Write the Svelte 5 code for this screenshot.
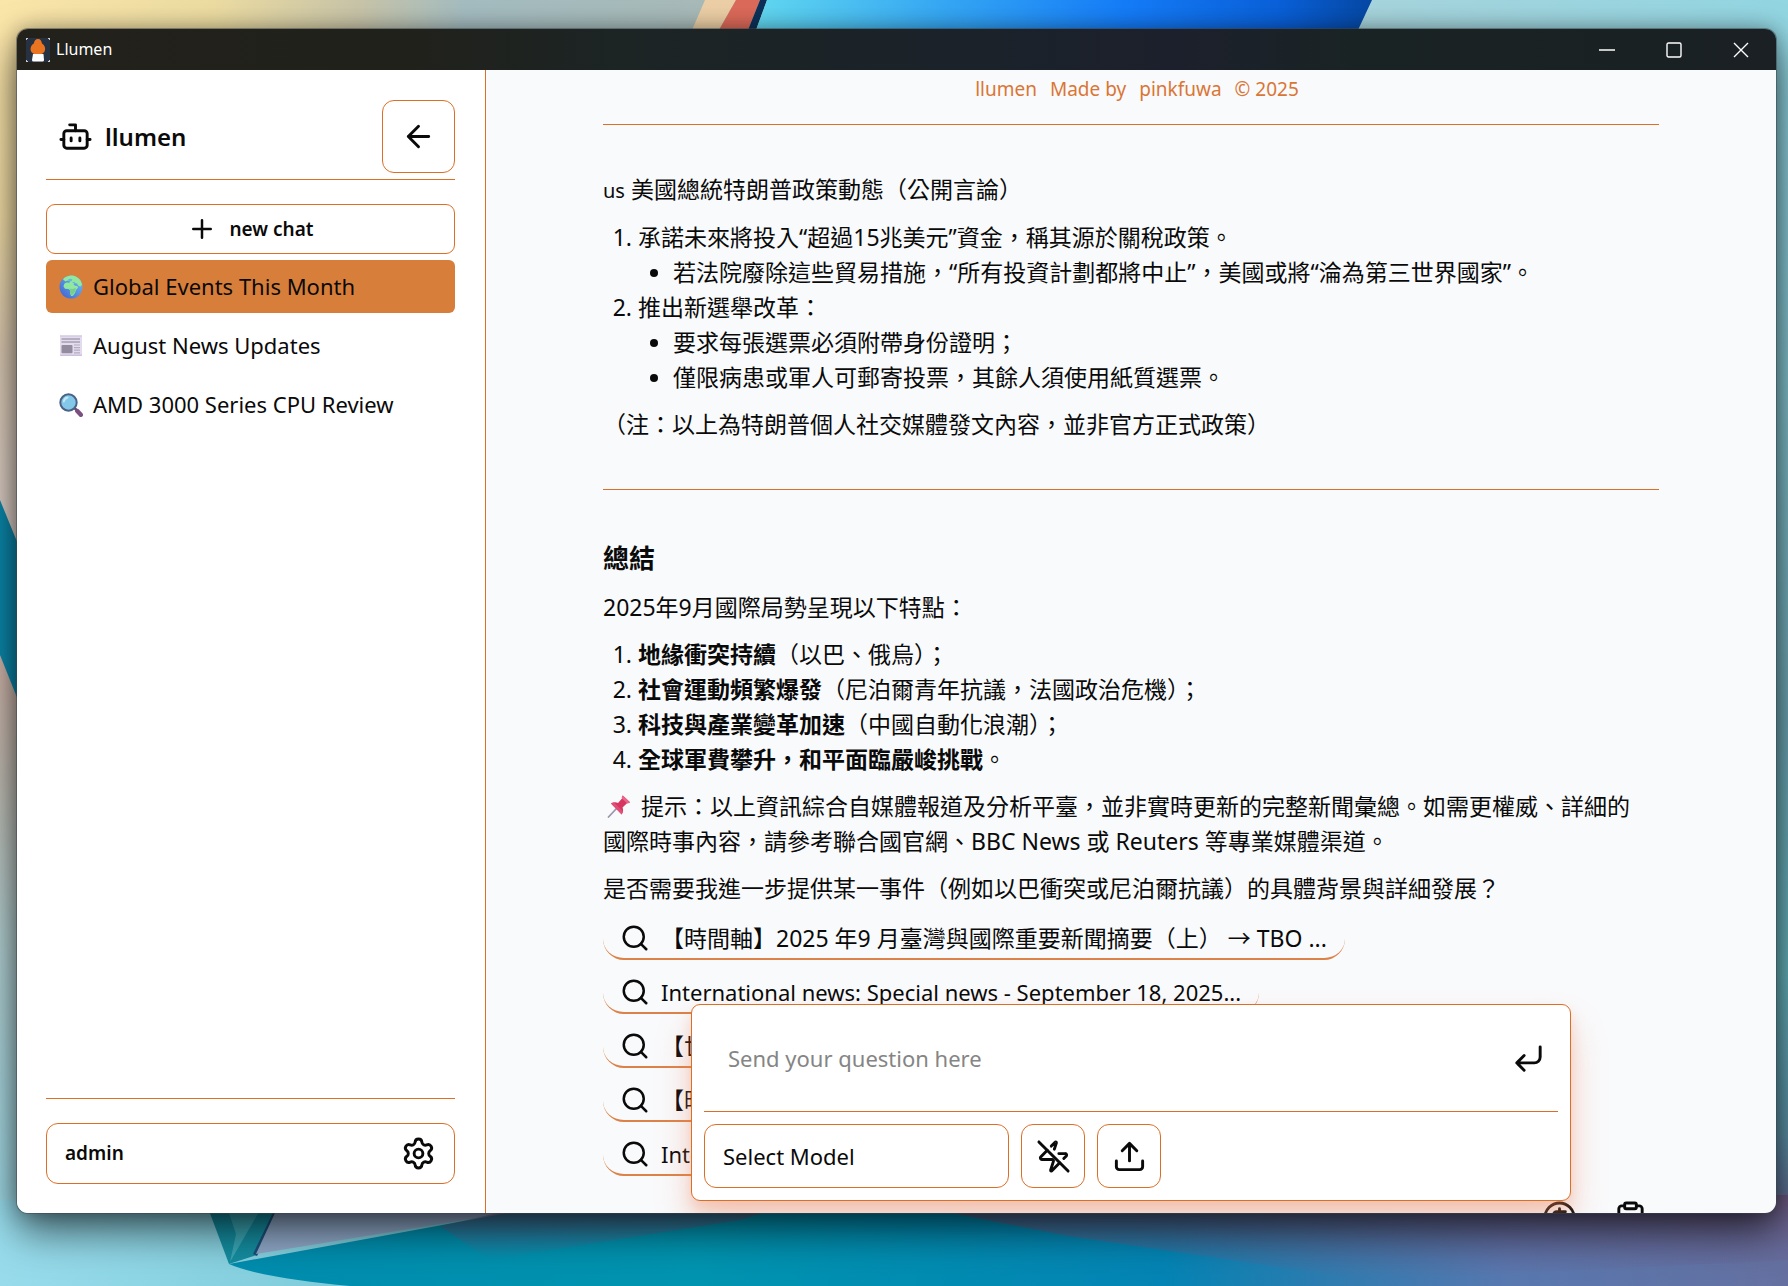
<script>
  const chats = [
    { icon: 'globe', title: 'Global Events This Month', active: true },
    { icon: 'news', title: 'August News Updates', active: false },
    { icon: 'lens', title: 'AMD 3000 Series CPU Review', active: false }
  ];

  const summary = [
    { lead: '地緣衝突持續', rest: '（以巴、俄烏）；' },
    { lead: '社會運動頻繁爆發', rest: '（尼泊爾青年抗議，法國政治危機）；' },
    { lead: '科技與產業變革加速', rest: '（中國自動化浪潮）；' },
    { lead: '全球軍費攀升，和平面臨嚴峻挑戰', rest: '。' }
  ];

  const sources = [
    { cjk: true, title: '【時間軸】2025 年9 月臺灣與國際重要新聞摘要（上） → TBO ...' },
    { cjk: false, title: 'International news: Special news - September 18, 2025...' },
    { cjk: true, title: '【世界新聞】2025 年9 月' },
    { cjk: true, title: '【時事新聞】2025 年9 月' },
    { cjk: false, title: 'International news: September 2025' }
  ];

  let question = $state('');
</script>

{#snippet icon(name, cls)}
  <svg class="line-icon {cls}" viewBox="0 0 24 24" aria-hidden="true">
    {#if name === 'bot'}
      <path d="M12 8V4H8" />
      <rect width="16" height="12" x="4" y="8" rx="2" />
      <path d="M2 14h2M20 14h2M15 13v2M9 13v2" />
    {:else if name === 'back'}
      <path d="m12 19-7-7 7-7M19 12H5" />
    {:else if name === 'plus'}
      <path d="M5 12h14M12 5v14" />
    {:else if name === 'settings'}
      <path d="M9.671 4.136a2.34 2.34 0 0 1 4.659 0 2.34 2.34 0 0 0 3.319 1.915 2.34 2.34 0 0 1 2.33 4.033 2.34 2.34 0 0 0 0 3.831 2.34 2.34 0 0 1-2.33 4.033 2.34 2.34 0 0 0-3.319 1.915 2.34 2.34 0 0 1-4.659 0 2.34 2.34 0 0 0-3.32-1.915 2.34 2.34 0 0 1-2.33-4.033 2.34 2.34 0 0 0 0-3.831A2.34 2.34 0 0 1 6.35 6.051a2.34 2.34 0 0 0 3.319-1.915" />
      <circle cx="12" cy="12" r="3" />
    {:else if name === 'search'}
      <circle cx="11" cy="11" r="8" />
      <path d="m21 21-4.3-4.3" />
    {:else if name === 'enter'}
      <path d="M20 4v7a4 4 0 0 1-4 4H4M9 10l-5 5 5 5" />
    {:else if name === 'zap-off'}
      <path d="M10.513 4.856 13.12 2.17a.5.5 0 0 1 .86.46l-1.377 4.317" />
      <path d="M15.656 10H20a1 1 0 0 1 .78 1.63l-1.72 1.773" />
      <path d="M16.273 16.273 10.88 21.83a.5.5 0 0 1-.86-.46l1.92-6.02A1 1 0 0 0 11 14H4a1 1 0 0 1-.78-1.63l4.507-4.643" />
      <path d="m2 2 20 20" />
    {:else if name === 'upload'}
      <path d="M12 3v12M17 8l-5-5-5 5M21 15v4a2 2 0 0 1-2 2H5a2 2 0 0 1-2-2v-4" />
    {:else if name === 'cost'}
      <circle cx="12" cy="12" r="10" />
      <path d="M16 8h-6a2 2 0 1 0 0 4h4a2 2 0 1 1 0 4H8M12 18V6" />
    {:else if name === 'clipboard'}
      <rect width="8" height="4" x="8" y="2" rx="1" />
      <path d="M16 4h2a2 2 0 0 1 2 2v14a2 2 0 0 1-2 2H6a2 2 0 0 1-2-2V6a2 2 0 0 1 2-2h2" />
    {/if}
  </svg>
{/snippet}

{#snippet emoji(name)}
  <svg class="emoji" viewBox="0 0 24 24" aria-hidden="true">
    {#if name === 'globe'}
      <circle cx="12" cy="12" r="11.5" fill="url(#sea)" />
      <path d="M4 4.200C6 2 9.500.6 12.500.6c3.500 0 7 2 9 5l1.600 3.800-1.600 2.200-2-.6-1.500-2.500-2.500-.5-1 1.300 1.500 1.500 2.500.2.500 1.800-2 2.200-1 3-2 2.700-1.800.3-1.200-2.500.2-3-1.700-1.500-3.500-.2-1.500-2.300.8-2.700 2.200-1.200 3 .2.500-1.500-2.500-.8-2 1-1.500-1.300z" fill="#93e8a0" />
      <path d="M10 13.500 13.500 14l3.500-1-1 3.800-2 2.700-1.800.8-1.200-2.800.2-2.800z" fill="#74cf90" />
      <path d="m9 4.500 2.500-.8 2 .8-1 1.700-2.500.3zM13 7.200l2.500-.4.8.8-2 .7z" fill="#62b8e8" />
    {:else if name === 'news'}
      <path d="M1 1.500h22v19.500a1 1 0 0 1-1 1H2a1 1 0 0 1-1-1z" fill="#e3dcee" />
      <path d="M1 1.500h22v1H1zM1 20.500h22v.500a1 1 0 0 1-1 1H2a1 1 0 0 1-1-1z" fill="#cdbfdc" />
      <path d="M2.500 5h18.500M2.500 8h18.500" stroke="#a79fb3" stroke-width="1.300" />
      <rect x="2.500" y="11" width="11" height="8.200" rx="1" fill="#938c9f" />
      <path d="M15 11h6M15 13.600h6M15 16.200h6M15 18.800h6" stroke="#b4abc0" stroke-width="1.200" />
    {:else if name === 'lens'}
      <path d="m15.500 15 2.500 2.500" stroke="#5c5068" stroke-width="2.500" />
      <path d="m18.300 18 3.500 3.800" stroke="#7d4f80" stroke-width="4.400" stroke-linecap="round" />
      <circle cx="9.500" cy="9.500" r="8.200" fill="#83c8e8" stroke="#4b6285" stroke-width="2" />
      <path d="M4.800 8.500a5 5 0 0 1 3.800-4" fill="none" stroke="#c4e8f8" stroke-width="1.800" stroke-linecap="round" />
    {:else if name === 'pin'}
      <path d="M9.500 14.500 1.500 23" stroke="#9f94ad" stroke-width="1.800" stroke-linecap="round" />
      <path d="M4 9.500c2.500-1.500 5-1.500 7-.5l4-4.500c-.3-1.200 0-2.200.8-3L23 8.300c-.8.900-1.800 1.200-3 1L15.500 13.500c1 2.200.8 4.500-.8 7z" fill="#d6365f" />
      <path d="M15.800 1.500 23 8.300c-.8.900-1.800 1.200-3 1L15 4.500c-.3-1.200 0-2.200.8-3z" fill="#e9668a" />
      <path d="M4 9.500c1-.6 2-1 3-1.100l8.700 8.700c-.2 1.100-.5 2.300-1 3.400z" fill="#e04f77" />
    {/if}
  </svg>
{/snippet}

<div class="desktop">
  <svg class="wallpaper" viewBox="0 0 1788 1286" preserveAspectRatio="none" aria-hidden="true">
    <defs>
      <linearGradient id="sea" x1="0" y1="1" x2="1" y2="0">
        <stop offset="0" stop-color="#3f5fd0" />
        <stop offset="1" stop-color="#6fc4f0" />
      </linearGradient>
      <linearGradient id="sky" x1="0" x2="1">
        <stop offset="0" stop-color="#fbe6a9" />
        <stop offset=".12" stop-color="#ecdca2" />
        <stop offset=".2" stop-color="#c8c4a8" />
        <stop offset=".26" stop-color="#a4bcc0" />
        <stop offset=".4" stop-color="#a8bab8" />
        <stop offset=".75" stop-color="#a8d4dc" />
        <stop offset="1" stop-color="#92d6e2" />
      </linearGradient>
      <linearGradient id="left" x1="0" x2="0" y1="0" y2="1">
        <stop offset="0" stop-color="#fbe6a9" />
        <stop offset=".15" stop-color="#f2dda6" />
        <stop offset=".26" stop-color="#dccab4" />
        <stop offset=".4" stop-color="#dccfc8" />
        <stop offset=".5" stop-color="#cfb3a8" />
        <stop offset=".6" stop-color="#c0bdb4" />
        <stop offset=".72" stop-color="#b4d0d2" />
        <stop offset="1" stop-color="#98dcec" />
      </linearGradient>
      <linearGradient id="shore" x1="0" x2="1">
        <stop offset="0" stop-color="#98dcec" />
        <stop offset="1" stop-color="#74c4d2" />
      </linearGradient>
      <linearGradient id="right" x1="0" x2="0" y1="0" y2="1">
        <stop offset="0" stop-color="#92d6e2" />
        <stop offset=".3" stop-color="#84c4d0" />
        <stop offset=".55" stop-color="#70aab8" />
        <stop offset=".75" stop-color="#66b4bc" />
        <stop offset=".88" stop-color="#5c92a8" />
        <stop offset=".93" stop-color="#606c90" />
        <stop offset="1" stop-color="#6570a0" />
      </linearGradient>
      <linearGradient id="blue" x1="0" x2="1">
        <stop offset="0" stop-color="#62d8f0" />
        <stop offset=".3" stop-color="#36a8f4" />
        <stop offset=".6" stop-color="#157cf8" />
        <stop offset=".85" stop-color="#0a60d8" />
        <stop offset="1" stop-color="#0648a4" />
      </linearGradient>
      <linearGradient id="floor" x1="229" x2="1788" y1="1240" y2="1240" gradientUnits="userSpaceOnUse">
        <stop offset="0" stop-color="#008cae" />
        <stop offset=".3" stop-color="#0094b0" />
        <stop offset=".6" stop-color="#0484b4" />
        <stop offset=".7" stop-color="#2c7cb0" />
        <stop offset=".82" stop-color="#5878b0" />
        <stop offset="1" stop-color="#6570a0" />
      </linearGradient>
      <linearGradient id="dusk" x1="0" x2="0" y1="0" y2="1">
        <stop offset="0" stop-color="#6a5478" stop-opacity=".9" />
        <stop offset="1" stop-color="#6a6090" stop-opacity="0" />
      </linearGradient>
    </defs>
    <rect width="1788" height="1286" fill="url(#sky)" />
    <rect y="28" width="60" height="1258" fill="url(#left)" />
    <rect y="1200" width="500" height="86" fill="url(#shore)" />
    <rect x="1700" y="28" width="88" height="1258" fill="url(#right)" />
    <path d="M705 0h31l-17 30h-27z" fill="#eccfa6" />
    <path d="M736 0h24l-12 30h-29z" fill="#dc6a5a" />
    <path d="M760 0h7l-11 30h-8z" fill="#0d3158" />
    <path d="M767 0h605l-14 30H756z" fill="url(#blue)" />
    <path d="M0 500l18 44v156L0 655z" fill="#0c88ac" />
    <path d="M205 1200 229 1264l28-9 24-55z" fill="#148da0" />
    <path d="M228 1210l8 24-6 28 30-52z" fill="#3aa6b4" />
    <path d="M279 1200 253 1254l4 2 28-56z" fill="#1c4f7c" />
    <path d="M281 1200 256 1254l330-54z" fill="#8fa8c8" />
    <path d="M229 1264 486 1217 600 1195H1788v91H350C300 1281 255 1275 229 1264z" fill="url(#floor)" />
    <path d="M440 1226 600 1190h240l-100 30-250 40z" fill="url(#dusk)" />
    <path d="M860 1195h928v65l-420 20-300-44z" fill="url(#dusk)" />
  </svg>

  <div class="window">
    <header class="titlebar">
      <svg class="app-icon" viewBox="0 0 24 24" aria-hidden="true">
        <rect width="24" height="24" fill="#263142" />
        <path d="M0 0h2M0 0v2M24 0h-2M24 0v2M0 24h2M0 24v-2M24 24h-2M24 24v-2" stroke="#c8ccd2" stroke-width="2" />
        <path d="M12 1c2.500 0 3.500 2 4 4.500 2.500 1.500 3.500 4 3 6.500-.5 2.500-2.500 4.500-7 4.500S5 14.500 4.600 12c-.4-2.500.6-5 3.200-6.500C8.300 3 9.500 1 12 1z" fill="#ea7420" />
        <path d="M7 16h10.500l.5 6a1.500 1.500 0 0 1-1.500 1.500h-9A1.500 1.500 0 0 1 6 22z" fill="#fff" />
      </svg>
      <span class="app-name">Llumen</span>
      <button class="control" aria-label="Minimize">
        <svg viewBox="0 0 16 16"><path d="M0 8h16" /></svg>
      </button>
      <button class="control" aria-label="Maximize">
        <svg viewBox="0 0 16 16"><rect x="1" y="1" width="14" height="14" rx="1.5" /></svg>
      </button>
      <button class="control" aria-label="Close">
        <svg viewBox="0 0 16 16"><path d="m1 1 14 14M15 1 1 15" /></svg>
      </button>
    </header>

    <div class="body">
      <aside class="sidebar">
        <div class="brand">
          {@render icon('bot', 'large')}
          <h1>llumen</h1>
          <button class="back" aria-label="Collapse sidebar">{@render icon('back', 'large')}</button>
        </div>

        <button class="new-chat">{@render icon('plus', 'medium')}<span>new chat</span></button>
        <nav>
          {#each chats as chat}
            <a href="#{chat.icon}" class="chat" class:active={chat.active}>
              {@render emoji(chat.icon)}<span>{chat.title}</span>
            </a>
          {/each}
        </nav>

        <div class="account">
          <button class="user"><span>admin</span>{@render icon('settings', 'large')}</button>
        </div>
      </aside>

      <main>
        <div class="scroll">
          <p class="credit"><span>llumen</span><span>Made by</span><span>pinkfuwa</span><span>© 2025</span></p>
          <article>
            <hr />
            <p><span class="region">us</span> 美國總統特朗普政策動態（公開言論）</p>
            <ol>
              <li>
                承諾未來將投入“超過15兆美元”資金，稱其源於關稅政策。
                <ul><li>若法院廢除這些貿易措施，“所有投資計劃都將中止”，美國或將“淪為第三世界國家”。</li></ul>
              </li>
              <li>
                推出新選舉改革：
                <ul>
                  <li>要求每張選票必須附帶身份證明；</li>
                  <li>僅限病患或軍人可郵寄投票，其餘人須使用紙質選票。</li>
                </ul>
              </li>
            </ol>
            <p>（注：以上為特朗普個人社交媒體發文內容，並非官方正式政策）</p>
            <hr />
            <h3>總結</h3>
            <p>2025年9月國際局勢呈現以下特點：</p>
            <ol>
              {#each summary as point}
                <li><strong>{point.lead}</strong>{point.rest}</li>
              {/each}
            </ol>
            <p>
              <span class="pin">{@render emoji('pin')}</span> 提示：以上資訊綜合自媒體報道及分析平臺，並非實時更新的完整新聞彙總。如需更權威、詳細的國際時事內容，請參考聯合國官網、BBC News 或 Reuters 等專業媒體渠道。
            </p>
            <p>是否需要我進一步提供某一事件（例如以巴衝突或尼泊爾抗議）的具體背景與詳細發展？</p>
          </article>

          <div class="sources">
            {#each sources as source, i}
              <a href="#source-{i}" class="source" class:latin={!source.cjk}>
                {@render icon('search', 'medium')}<span>{source.title}</span>
              </a>
            {/each}
          </div>
          <div class="actions">
            <button aria-label="Cost">{@render icon('cost', 'large')}</button>
            <button aria-label="Copy">{@render icon('clipboard', 'large')}</button>
          </div>
        </div>

        <form class="composer">
          <div class="prompt">
            <textarea rows="1" placeholder="Send your question here" aria-label="Question" bind:value={question}></textarea>
            <button type="button" class="send" aria-label="Send">{@render icon('enter', 'large')}</button>
          </div>
          <div class="tools">
            <select aria-label="Model"><option>Select Model</option></select>
            <button type="button" class="tool" aria-label="Disable fast mode">{@render icon('zap-off', 'large')}</button>
            <button type="button" class="tool" aria-label="Upload file">{@render icon('upload', 'large')}</button>
          </div>
        </form>
      </main>
    </div>
  </div>
</div>

<style>
  :global(body) {
    margin: 0;
  }

  .desktop {
    --accent: #dc6e26;
    position: relative;
    box-sizing: border-box;
    height: 100vh;
    padding: 29px 12px 73px 17px;
    overflow: hidden;
    font-family: 'Noto Sans', 'Noto Sans CJK TC', sans-serif;
    font-size: 23px;
    line-height: 35px;
    color: #0a0a0a;
  }

  .desktop * {
    box-sizing: border-box;
  }

  .wallpaper {
    position: absolute;
    inset: 0;
    width: 100%;
    height: 100%;
  }

  .window {
    position: relative;
    display: flex;
    flex-direction: column;
    height: 100%;
    border-radius: 11px;
    overflow: hidden;
    box-shadow:
      0 0 0 1px rgba(60, 70, 75, 0.5),
      0 18px 40px rgba(0, 0, 0, 0.6),
      0 0 20px rgba(0, 0, 0, 0.3);
  }

  button,
  select,
  textarea {
    margin: 0;
    padding: 0;
    border: 0;
    background: none;
    font: inherit;
    color: inherit;
  }

  a {
    color: inherit;
    text-decoration: none;
  }

  .line-icon {
    flex: none;
    display: block;
    fill: none;
    stroke: currentColor;
    stroke-width: 2;
    stroke-linecap: round;
    stroke-linejoin: round;
  }

  .large {
    width: 35px;
    height: 35px;
  }

  .medium {
    width: 30px;
    height: 30px;
  }

  .emoji {
    flex: none;
    display: block;
    width: 24px;
    height: 24px;
  }

  .titlebar {
    flex: none;
    display: flex;
    align-items: center;
    height: 41px;
    padding: 0 2px 0 9px;
    background: linear-gradient(90deg, #22211b 0%, #21211b 22%, #1c2424 34%, #1b222a 55%, #1c202c 66%, #1a2324 76%, #1a2023 100%);
    color: #fff;
    font-size: 16px;
  }

  .app-icon {
    width: 24px;
    height: 24px;
  }

  .app-name {
    flex: 1;
    padding-left: 6px;
  }

  .control {
    display: grid;
    place-items: center;
    width: 67px;
    height: 100%;
  }

  .control svg {
    width: 16px;
    height: 16px;
    fill: none;
    stroke: #fff;
    stroke-width: 1.4;
  }

  .body {
    flex: 1;
    display: flex;
    min-height: 0;
  }

  .sidebar {
    flex: none;
    display: flex;
    flex-direction: column;
    width: 469px;
    padding: 30px 30px 29px 29px;
    border-right: 1px solid var(--accent);
    background: #fff;
  }

  .brand {
    display: flex;
    align-items: center;
    gap: 12px;
    padding: 0 0 6px 12px;
    border-bottom: 1px solid var(--accent);
  }

  h1 {
    flex: 1;
    margin: 0;
    font-size: 24px;
    font-weight: 600;
  }

  .back {
    display: grid;
    place-items: center;
    width: 73px;
    height: 73px;
    border: 1px solid var(--accent);
    border-radius: 12px;
  }

  .new-chat {
    display: flex;
    align-items: center;
    justify-content: center;
    gap: 12px;
    height: 50px;
    margin: 24px 0 6px;
    border: 1px solid var(--accent);
    border-radius: 9px;
    font-size: 19px;
    font-weight: 600;
  }

  nav {
    flex: 1;
    display: flex;
    flex-direction: column;
    gap: 6px;
  }

  .chat {
    display: flex;
    align-items: center;
    gap: 10px;
    height: 53px;
    padding: 0 13px;
    border-radius: 6px;
    font-size: 22px;
  }

  .active {
    background: #d87e3b;
  }

  .account {
    padding-top: 24px;
    border-top: 1px solid var(--accent);
  }

  .user {
    display: flex;
    align-items: center;
    justify-content: space-between;
    width: 100%;
    height: 61px;
    padding: 0 18px;
    border: 1px solid var(--accent);
    border-radius: 12px;
    font-size: 19px;
    font-weight: 600;
  }

  main {
    position: relative;
    flex: 1;
    min-width: 0;
    overflow: hidden;
    background: #f9fafc;
  }

  .scroll {
    height: 100%;
    padding: 7px 117px 0;
    overflow: hidden;
  }

  .credit {
    display: flex;
    justify-content: center;
    gap: 13px;
    margin: 0;
    padding-left: 12px;
    font-size: 19px;
    line-height: 24px;
    color: #da7635;
  }

  article p,
  article ol,
  article ul {
    margin: 0;
  }

  article > p,
  article > ol {
    margin-bottom: 12px;
  }

  article > p {
    padding-right: 12px;
  }

  article hr {
    height: 1px;
    margin: 47px 0 51px;
    border: 0;
    background: var(--accent);
  }

  article hr:first-child {
    margin: 23px 0 47px;
  }

  ol,
  ul {
    padding-left: 35px;
  }

  ul {
    list-style: disc;
  }

  h3 {
    margin: 0 0 14px;
    font-size: 26px;
    font-weight: 700;
  }

  .region {
    font-size: 20px;
  }

  .pin {
    display: inline-block;
    padding: 0 4px;
    vertical-align: -3px;
  }

  .sources {
    display: flex;
    flex-direction: column;
    align-items: flex-start;
    gap: 12px;
  }

  .source {
    display: flex;
    align-items: center;
    gap: 11px;
    height: 42px;
    padding: 0 18px 0 17px;
    border-bottom: 2px solid #dc8248;
    border-radius: 21px;
    white-space: nowrap;
  }

  .latin {
    font-size: 22px;
  }

  .actions {
    display: flex;
    justify-content: flex-end;
    gap: 36px;
    padding: 24px 11px 0;
  }

  .composer {
    position: absolute;
    right: 0;
    bottom: 12px;
    left: 0;
    width: calc(100% - 410px);
    margin: 0 auto;
    padding: 0 12px 12px;
    border: 1px solid var(--accent);
    border-radius: 9px;
    background: #fff;
    box-shadow:
      0 24px 36px rgba(236, 130, 90, 0.32),
      0 8px 14px rgba(236, 130, 90, 0.25);
  }

  .prompt {
    display: flex;
    align-items: center;
    height: 107px;
    padding: 0 12px 0 24px;
    border-bottom: 1px solid var(--accent);
  }

  textarea {
    flex: 1;
    height: 35px;
    font-size: 22px;
    resize: none;
    outline: none;
  }

  textarea::placeholder {
    color: #858585;
    opacity: 1;
  }

  .tools {
    display: flex;
    gap: 12px;
    padding-top: 12px;
  }

  select {
    width: 305px;
    height: 64px;
    padding: 0 18px;
    border: 1px solid var(--accent);
    border-radius: 12px;
    appearance: none;
    font-size: 22px;
  }

  .tool {
    display: grid;
    place-items: center;
    width: 64px;
    height: 64px;
    border: 1px solid var(--accent);
    border-radius: 12px;
  }
</style>
